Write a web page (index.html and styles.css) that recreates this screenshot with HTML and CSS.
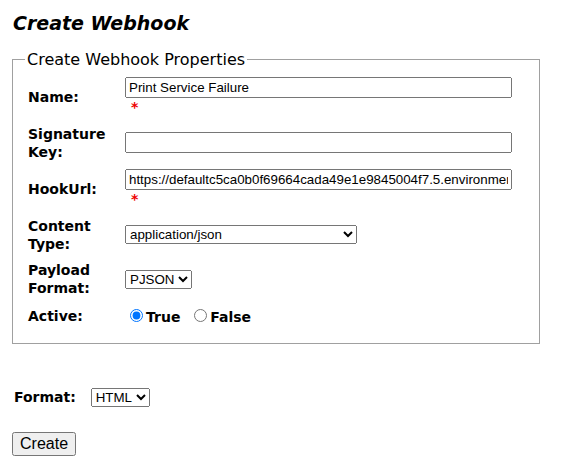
FILE: index.html
```html
<!DOCTYPE html>
<html lang="en">
<head>
    <meta charset="UTF-8">
    <title>Create Webhook</title>
    <meta name="viewport" content="width=device-width, initial-scale=1.0">
    <link rel="stylesheet" href="styles.css">
</head>
<body>
    <h2 class="pageTitle">Create Webhook</h2>

    <form id="webhook-form">
        <fieldset class="props">
            <legend>Create Webhook Properties</legend>
            <table class="propTable">
                <tr>
                    <td class="lbl"><label for="name">Name:</label></td>
                    <td>
                        <input type="text" id="name" class="wide" value="Print Service Failure"><br>
                        <span class="req">*</span>
                    </td>
                </tr>
                <tr>
                    <td class="lbl"><label for="sigkey">Signature Key:</label></td>
                    <td><input type="text" id="sigkey" class="wide"></td>
                </tr>
                <tr>
                    <td class="lbl"><label for="hookurl">HookUrl:</label></td>
                    <td>
                        <input type="text" id="hookurl" class="wide" value="https://defaultc5ca0b0f69664cada49e1e9845004f7.5.environment.api.powerplatform.com"><br>
                        <span class="req">*</span>
                    </td>
                </tr>
                <tr>
                    <td class="lbl"><label for="ctype">Content Type:</label></td>
                    <td>
                        <select id="ctype" class="ctype">
                            <option>application/json</option>
                            <option>application/xml</option>
                        </select>
                    </td>
                </tr>
                <tr>
                    <td class="lbl"><label for="pformat">Payload Format:</label></td>
                    <td>
                        <select id="pformat">
                            <option>PJSON</option>
                            <option>JSON</option>
                        </select>
                    </td>
                </tr>
                <tr>
                    <td class="lbl">Active:</td>
                    <td class="radios">
                        <label><input type="radio" name="active" checked>True</label>
                        <label><input type="radio" name="active">False</label>
                    </td>
                </tr>
            </table>
        </fieldset>

        <div class="formatRow">
            <label for="fmt">Format:</label>
            <select id="fmt">
                <option>HTML</option>
                <option>JSON</option>
            </select>
        </div>

        <input type="submit" class="createBtn" value="Create">
    </form>
</body>
</html>
```

FILE: styles.css
```css
body {
    margin: 8px 10px;
    font-family: "DejaVu Sans", Verdana, sans-serif;
    font-size: 14px;
    color: #000;
}

.pageTitle {
    font-size: 19px;
    font-style: italic;
    font-weight: bold;
    margin: 4px 0 0 3px;
}

.props {
    margin: 16px 2px 0;
    padding: 4px 12px 13px 12px;
    border: 1px solid #a0a0a0;
    width: 502px;
}

.props legend {
    font-size: 16px;
    padding: 0 2px;
}

.propTable {
    border-collapse: separate;
    border-spacing: 0;
}

.propTable td {
    padding: 4px 3px 4.5px;
    vertical-align: middle;
    line-height: 18px;
}

.lbl {
    font-weight: bold;
    width: 91px;
}

.wide {
    width: 379px;
    font-family: "Liberation Sans", Arial, sans-serif;
    font-size: 13.33px;
}

select {
    font-family: "Liberation Sans", Arial, sans-serif;
    font-size: 13.33px;
}

.ctype {
    width: 232px;
}

.req {
    color: #e00;
    font-weight: bold;
    margin-left: 6px;
}

.radios {
    font-weight: bold;
}

.radios label {
    margin-right: 4px;
}

.formatRow {
    margin: 44px 0 0 4px;
    font-weight: bold;
}

.formatRow label {
    margin-right: 10px;
}

.createBtn {
    margin-top: 25px;
    margin-left: 2px;
    font-family: "Liberation Sans", Arial, sans-serif;
    font-size: 16px;
}
```
